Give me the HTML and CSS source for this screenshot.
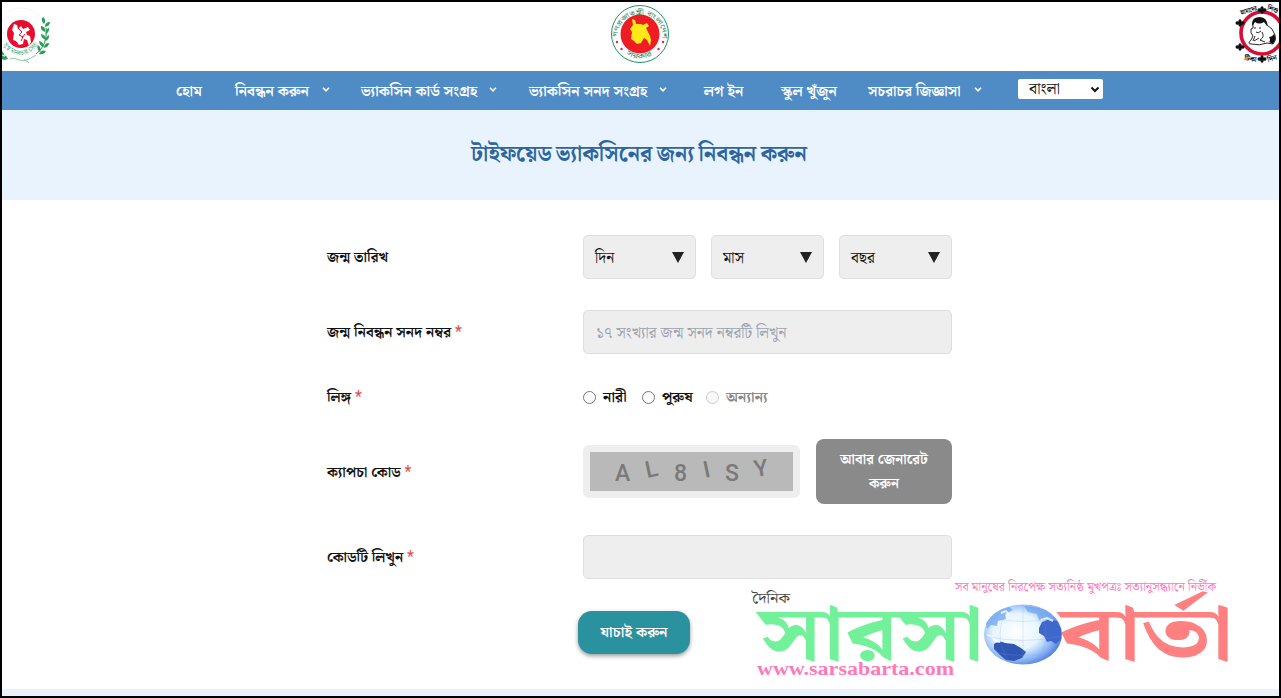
FILE: index.html
```
<!DOCTYPE html>
<html lang="bn">
<head>
    <meta charset="UTF-8" />
    <meta name="viewport" content="width=device-width, initial-scale=1.0" />
    <title>টাইফয়েড ভ্যাকসিনের জন্য নিবন্ধন করুন</title>
    <link rel="stylesheet" href="styles.css">
</head>
<body>

<header class="header">
    <svg class="logo-left" viewBox="0 0 50 60">
        <circle cx="20" cy="28" r="26" fill="none" stroke="#f6f6f6" />
        <circle cx="20" cy="28" r="14" fill="#e60d2e" />
        <path d="M13 18l3 1 1 4 3-3 2 3 5-2 2 3-4 2 1 3 3 1 1 6-2 4-2-6-3-1-1 5-4 1-3-4-3-1 1-7-2-3z" fill="#fff" />
        <path d="M17 22l4 4-3 3 4 2-2 4M24 28l-3 4" fill="none" stroke="#e60d2e" />
        <path d="M45 22Q47 39 35 48" fill="none" stroke="#2c9c58" />
        <path d="M43 18q-4-4-1-7 4 3 1 7zm1 3q5-1 5-5-5 0-5 5zm0 5q-5-2-4-6 5 1 4 6zm1 2q4-3 3-6-4 1-3 6zm0 6q-5-2-5-6 5 1 5 6zm0 1q4-3 3-6-4 2-3 6zm-2 6q-5-1-5-6 5 1 5 6zm0 1q5-1 5-5-5 0-5 5zm-4 4q-4-3-2-7 4 3 2 7zm-1 2q5 1 7-3-5-2-7 3zM4 51q-1-6-5-7v4zm3 2q-4 2-8-1v-3q6-1 8 4z" fill="#2c9c58" />
        <path d="M9 53q5-2 9 1 7 2 17-5M23 54q4 1 5 3" fill="none" stroke="#8ecaa5" />
        <path id="ring1" d="M2 39Q19 60 38 38" fill="none" />
        <text class="seal-text" fill="#4aa56f"><textPath href="#ring1" textLength="42" lengthAdjust="spacingAndGlyphs">সুস্থ মানবতার সেবা</textPath></text>
    </svg>
    <svg class="logo-center" viewBox="0 0 60 60">
        <circle cx="30" cy="30" r="28.5" fill="#fff" stroke="#23925f" />
        <circle cx="30" cy="30" r="19.5" fill="#ee1c25" />
        <path d="M22 15l3 1 1 4 5 0 2 1 4-2 2 3-3 2 2 4 2 4 1 4-1 6-3-6-3-2-3 5-4 1-3-3-3-2 1-7-2-3 3-4z" fill="#ffea18" />
        <path id="ring2" d="M7.5 33A22.5 22.5 0 1 1 52.5 33" fill="none" />
        <path id="ring3" d="M16 50Q30 59 44 50" fill="none" />
        <text class="seal-text" fill="#23815a"><textPath href="#ring2" textLength="72" lengthAdjust="spacingAndGlyphs">গণপ্রজাতন্ত্রী বাংলাদেশ</textPath></text>
        <text class="seal-text" fill="#23815a"><textPath href="#ring3" textLength="28" lengthAdjust="spacingAndGlyphs">সরকার</textPath></text>
        <g fill="#e8283a"><circle cx="7" cy="38" r="1.2" /><circle cx="11.500" cy="45" r="1.2" /><circle cx="53" cy="38" r="1.2" /><circle cx="48.500" cy="45" r="1.2" /></g>
    </svg>
    <svg class="logo-right" viewBox="0 0 44 60">
        <circle cx="27" cy="29" r="21" fill="#fff" stroke="#d70d35" stroke-width="3.6" />
        <text class="seal-text" font-weight="bold" x="6" y="11" textLength="17" lengthAdjust="spacingAndGlyphs" transform="rotate(-16 6 11)">আমাদের</text>
        <text class="seal-text" font-weight="bold" x="32" y="6" textLength="11" lengthAdjust="spacingAndGlyphs" transform="rotate(14 32 6)">শিশু</text>
        <text class="seal-text" font-weight="bold" x="9" y="56" transform="rotate(10 9 56)">টিকা</text>
        <text class="seal-text" font-weight="bold" x="33" y="58" transform="rotate(-15 33 58)">দিন</text>
        <g fill="#111">
            <path id="clover" d="M25.500 3.500q1.500-2.500 3 0v1q3-1 3 1.500t-3 1.500v1q-1.500 2.500-3 0v-1q-3 1-3-1.500t3-1.500z" />
            <use href="#clover" x="-22" y="13" />
            <use href="#clover" x="-22" y="37" />
            <use href="#clover" y="49" />
        </g>
        <path d="M18 24Q17 15 24 15Q32 15 32 21Q38 24 40 31Q42 36 38 40L32 39Q25 42 16 40Q12 40 16 36L18 32Q15 29 16 25z" fill="#fff" stroke="#111" stroke-width=".9" />
        <path d="M17 22Q16 13 25 13Q33 14 32 22L29 18Q24 21 20 18zM34 33q3 0 5-3 3 5-1 10l-4-2q2-2 0-5z" fill="#111" />
        <path d="M19 24h2m3 0h2m-5 4q2 2 5-1m-6 5l-2 5m9-9q3 5-2 8l5 2M24 34l-5 3" fill="none" stroke="#111" stroke-width=".9" />
    </svg>
</header>

<nav class="navbar">
    <a class="nav-item n1">হোম</a>
    <a class="nav-item n2">নিবন্ধন করুন<svg class="chevron" viewBox="0 0 8 5"><path d="M1 .8l3 3 3-3" /></svg></a>
    <a class="nav-item n3">ভ্যাকসিন কার্ড সংগ্রহ<svg class="chevron" viewBox="0 0 8 5"><path d="M1 .8l3 3 3-3" /></svg></a>
    <a class="nav-item n4">ভ্যাকসিন সনদ সংগ্রহ<svg class="chevron" viewBox="0 0 8 5"><path d="M1 .8l3 3 3-3" /></svg></a>
    <a class="nav-item n5">লগ ইন</a>
    <a class="nav-item n6">স্কুল খুঁজুন</a>
    <a class="nav-item n7">সচরাচর জিজ্ঞাসা<svg class="chevron" viewBox="0 0 8 5"><path d="M1 .8l3 3 3-3" /></svg></a>
    <div class="language">বাংলা<svg class="chevron" viewBox="0 0 8 5"><path d="M.5 .5l3.500 3.500 3.500-3.500" /></svg></div>
</nav>

<section class="banner">
    <h1>টাইফয়েড ভ্যাকসিনের জন্য নিবন্ধন করুন</h1>
</section>

<main class="content">
    <form class="form">
        <div class="row">
            <label>জন্ম তারিখ</label>
            <div class="dates">
                <div class="field select">দিন<i class="arrow"></i></div>
                <div class="field select">মাস<i class="arrow"></i></div>
                <div class="field select">বছর<i class="arrow"></i></div>
            </div>
        </div>
        <div class="row row-number">
            <label>জন্ম নিবন্ধন সনদ নম্বর <b>*</b></label>
            <input class="field" type="text" placeholder="১৭ সংখ্যার জন্ম সনদ নম্বরটি লিখুন" />
        </div>
        <div class="row row-gender">
            <label>লিঙ্গ <b>*</b></label>
            <div class="radios">
                <label class="g1"><input type="radio" name="gender" />নারী</label>
                <label class="g2"><input type="radio" name="gender" />পুরুষ</label>
                <label class="disabled"><input type="radio" name="gender" disabled />অন্যান্য</label>
            </div>
        </div>
        <div class="row row-captcha">
            <label>ক্যাপচা কোড <b>*</b></label>
            <div class="captcha">
                <svg class="captcha-image" viewBox="0 0 203 39">
                    <rect width="203" height="39" fill="#b9b9b9" />
                    <text x="25" y="29">A</text>
                    <text x="57" y="26" transform="rotate(-12 57 26)">L</text>
                    <text x="84" y="29">8</text>
                    <text x="115" y="26" transform="rotate(-12 115 26)">I</text>
                    <text x="135" y="29">S</text>
                    <text x="165" y="25" transform="rotate(-8 165 25)">Y</text>
                </svg>
            </div>
            <button class="regenerate" type="button">আবার জেনারেট<br>করুন</button>
        </div>
        <div class="row row-code">
            <label>কোডটি লিখুন <b>*</b></label>
            <input class="field" type="text" />
        </div>
        <button class="submit" type="button">যাচাই করুন</button>
    </form>
</main>

<footer class="footer"></footer>

<!-- Newspaper logo over the page -->
<svg class="watermark" viewBox="745 570 490 115">
    <defs>
        <radialGradient id="sea" cx=".42" cy=".45" r=".6">
            <stop offset="0" stop-color="#fff" />
            <stop offset=".5" stop-color="#e6f5ff" />
            <stop offset=".8" stop-color="#8bb6f5" />
            <stop offset="1" stop-color="#5278dc" />
        </radialGradient>
    </defs>
    <text class="tagline" x="955" y="591" textLength="261" lengthAdjust="spacingAndGlyphs">সব মানুষের নিরপেক্ষ সত্যনিষ্ঠ মুখপত্রঃ সত্যানুসন্ধ্যানে নির্ভীক</text>
    <text class="daily" x="752" y="603" textLength="38" lengthAdjust="spacingAndGlyphs">দৈনিক</text>
    <text class="brand brand-green" x="759" y="659" textLength="225" lengthAdjust="spacingAndGlyphs">সারসা</text>
    <text class="brand brand-red" x="1060" y="659" textLength="174" lengthAdjust="spacingAndGlyphs">বার্তা</text>
    <ellipse cx="1023" cy="634.5" rx="39" ry="30" fill="url(#sea)" />
    <path d="M994 644q5-4 11-1l9 1 7 4 5 4-4 6-8 3-8-1-6-5-6-6z" fill="#3157b5" />
    <path d="M1039 628l3-6 8-3 7 2 4 8 0 10-5 5-5-3-4 1-3-6-5-3z" fill="#3f68cd" />
    <path d="M986 623q8-13 23-16l4 3-8 4 1 5-8 2-1 5-6-1-4 4zM1024 606q16 0 27 9l3 5-10-2-5 2-2-6-9-2z" fill="#6fa6ef" opacity=".75" />
    <path d="M987 635l6 2 2 4 5 1M1001 613l5-2 3 4M1041 620l6-2 6 3" fill="none" stroke="#fff" stroke-width="2" opacity=".8" />
    <path d="M985 636q38 9 77 0M991 618q32 7 64 0M992 652q32 7 62 0M1023 605v59M1009 607q-18 27 0 55M1037 607q18 27 0 55" fill="none" stroke="#759ce8" stroke-width=".6" opacity=".35" />
    <text class="website" x="757" y="675" textLength="197" lengthAdjust="spacingAndGlyphs">www.sarsabarta.com</text>
</svg>

</body>
</html>
```
FILE: styles.css
```
* {
    box-sizing: border-box;
}
body {
    margin: 0;
    width: 1281px;
    height: 698px;
    border: 2px solid #000;
    overflow: hidden;
    position: relative;
    display: flex;
    flex-direction: column;
    background: #fff;
    color: #111;
    font-family: "Noto Serif Bengali", "Noto Sans Bengali", "Noto Sans", sans-serif;
    font-size: 15px;
}
.header {
    height: 69px;
    flex: none;
    display: flex;
    justify-content: space-between;
    align-items: flex-start;
    padding-top: 2px;
}
.logo-left {
    width: 50px;
    height: 60px;
    margin-top: 2px;
    margin-left: -1px;
}
.logo-center {
    width: 60px;
    height: 60px;
    margin-left: -7px;
}
.logo-right {
    width: 44px;
    height: 60px;
}
.seal-text {
    font-size: 7px;
}

/* Navigation */
.navbar {
    height: 39px;
    flex: none;
    display: flex;
    align-items: center;
    background: #4f8bc5;
    color: #fff;
    padding-left: 174px;
}
.nav-item {
    display: flex;
    align-items: center;
    justify-content: space-between;
    white-space: nowrap;
    font-size: 14.8px;
    font-weight: bold;
    padding-top: 1px;
}
.nav-item .chevron {
    margin-top: -3px;
}
.n1 {
    width: 26px;
    margin-right: 33px;
}
.n2 {
    width: 95px;
    margin-right: 31px;
}
.n3 {
    width: 136px;
    margin-right: 32px;
}
.n4 {
    width: 138px;
    margin-right: 37px;
}
.n5 {
    width: 40px;
    margin-right: 37px;
}
.n6 {
    width: 53px;
    margin-right: 34px;
}
.n7 {
    width: 114px;
    margin-right: 36px;
    font-size: 14.4px;
}
.chevron {
    width: 8px;
    height: 5px;
    fill: none;
    stroke: currentColor;
    stroke-width: 1.6;
    overflow: visible;
}
.language {
    width: 85px;
    height: 20px;
    margin-top: -3px;
    padding: 0 4px 0 11px;
    display: flex;
    align-items: center;
    justify-content: space-between;
    background: #fff;
    color: #111;
    border-radius: 2px;
    font-size: 16px;
    line-height: 23px;
}
.language .chevron {
    stroke-width: 2;
}

.banner {
    height: 90px;
    flex: none;
    background: #e8f3fe;
    text-align: center;
}
.banner h1 {
    margin: 0 3px 0 0;
    line-height: 90px;
    font-size: 22px;
    word-spacing: -1.3px;
    color: #2d659e;
    white-space: nowrap;
}

/* Form */
.content {
    height: 489px;
    flex: none;
    padding: 35px 0 0 325px;
}
.form {
    width: 625px;
}
.row {
    display: flex;
    align-items: center;
    height: 44px;
}
.row > label {
    width: 256px;
    flex: none;
    padding-top: 1px;
    white-space: nowrap;
    font-size: 14.6px;
    font-weight: bold;
    color: #111;
}
.row b {
    color: #e5484d;
    font-family: Roboto, sans-serif;
    font-size: 16px;
    line-height: 1;
    font-weight: normal;
}
.row-number {
    margin-top: 31px;
}
.row-gender {
    margin-top: 21px;
}
.row-captcha {
    height: 65px;
    margin-top: 20px;
}
.row-code {
    margin-top: 31px;
}
.field {
    width: 369px;
    height: 44px;
    padding: 2px 12px 0;
    border: 1px solid #dedede;
    border-radius: 5px;
    background: #eee;
    font-family: inherit;
    font-size: 15.4px;
}
.field::placeholder {
    color: #9ca3af;
}
.dates {
    display: flex;
    gap: 15px;
}
.select {
    width: 113px;
    padding-left: 11px;
    display: flex;
    align-items: center;
    justify-content: space-between;
}
.select .arrow {
    border: 6.5px solid transparent;
    border-top: 11px solid #222;
    border-bottom: 0;
    margin: -1px -1px 0 0;
}
.radios {
    display: flex;
}
.radios label {
    display: flex;
    align-items: center;
    white-space: nowrap;
    font-size: 14.8px;
    font-weight: bold;
}
.radios input {
    width: 13px;
    height: 13px;
    margin: 0 7px 0 0;
}
.g1 {
    width: 59px;
}
.g2 {
    width: 64px;
}
.radios .disabled {
    color: #888;
}
.captcha {
    width: 217px;
    height: 53px;
    padding: 7px;
    background: #eee;
    border-radius: 6px;
}
.captcha-image {
    display: block;
    width: 203px;
    height: 39px;
}
.captcha-image text {
    font: 500 23px Roboto, sans-serif;
    fill: #7a7a7a;
}
.regenerate {
    width: 136px;
    height: 65px;
    margin-left: 16px;
    padding: 1px 0 0;
    border: none;
    border-radius: 8px;
    background: #8a8a8a;
    color: #fff;
    font: bold 14.2px/24px "Noto Serif Bengali", "Noto Sans Bengali", sans-serif;
}
.submit {
    display: block;
    width: 112px;
    height: 43px;
    margin: 32px 0 0 251px;
    padding: 0;
    border: none;
    border-radius: 14px;
    background: #2a919e;
    box-shadow: 0 2px 4px rgba(0,0,0,0.4);
    color: #fff;
    font-family: inherit;
    font-size: 15px;
    font-weight: bold;
}
.footer {
    height: 7px;
    flex: none;
    background: #e9f2fc;
}

.watermark {
    position: absolute;
    left: 743px;
    top: 568px;
    width: 490px;
    height: 115px;
    overflow: visible;
}
.tagline {
    font-size: 13px;
    fill: #ff78b8;
}
.daily {
    font-size: 14px;
    fill: #444;
}
.brand {
    font-size: 76px;
    font-weight: bold;
}
.brand-green {
    fill: #72f19a;
}
.brand-red {
    fill: #ff8080;
}
.website {
    font: bold 18px "Liberation Serif", serif;
    fill: #ff78b8;
}
```
